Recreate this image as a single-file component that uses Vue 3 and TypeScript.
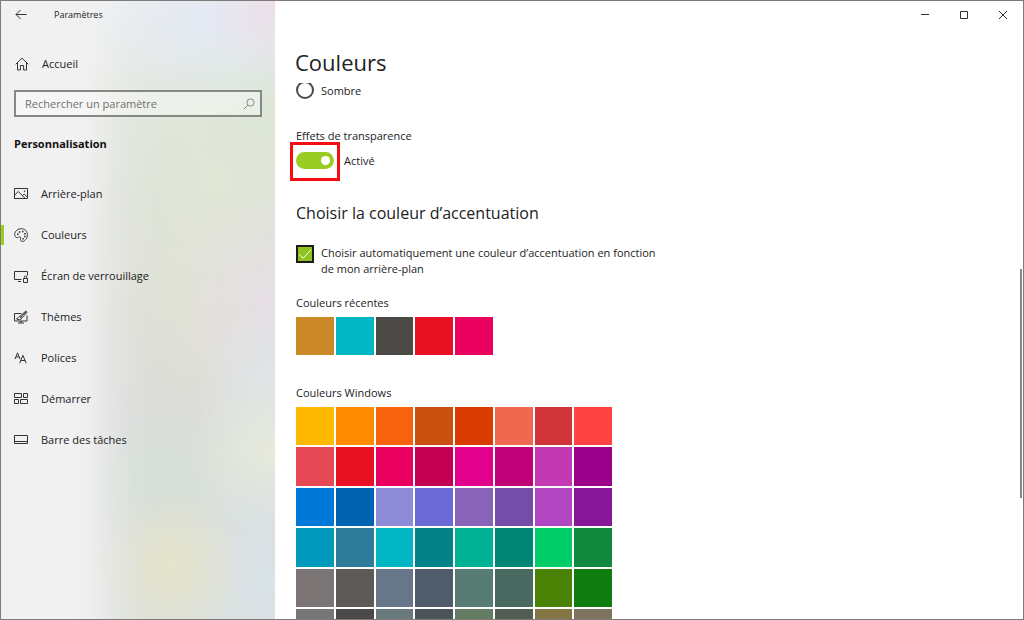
<script setup lang="ts">
import { ref } from 'vue'

interface NavItem {
  id: string
  label: string
}

const navItems: NavItem[] = [
  { id: 'background', label: 'Arrière-plan' },
  { id: 'colors', label: 'Couleurs' },
  { id: 'lock', label: 'Écran de verrouillage' },
  { id: 'themes', label: 'Thèmes' },
  { id: 'fonts', label: 'Polices' },
  { id: 'start', label: 'Démarrer' },
  { id: 'taskbar', label: 'Barre des tâches' },
]

const recentColors: string[] = ['#ca8829', '#00b7c3', '#4a4946', '#e81123', '#ea005e']

const windowsColors: string[] = [
  '#ffb900', '#ff8c00', '#f7630c', '#ca5010', '#da3b01', '#ef6950', '#d13438', '#ff4343',
  '#e74856', '#e81123', '#ea005e', '#c30052', '#e3008c', '#bf0077', '#c239b3', '#9a0089',
  '#0078d7', '#0063b1', '#8e8cd8', '#6b69d6', '#8764b8', '#744da9', '#b146c2', '#881798',
  '#0099bc', '#2d7d9a', '#00b7c3', '#038387', '#00b294', '#018574', '#00cc6a', '#10893e',
  '#7a7574', '#5d5a58', '#68768a', '#515c6b', '#567c73', '#486860', '#498205', '#107c10',
  '#767676', '#4c4a48', '#69797e', '#4a5459', '#647c64', '#525e54', '#847545', '#7e735f',
]

const active = ref('colors')
const query = ref('')
const mode = ref('light')
const transparency = ref(true)
const automatic = ref(true)
</script>

<template>
  <div class="window">
    <aside class="sidebar">
      <header class="bar">
        <button class="back" type="button" aria-label="Retour">
          <svg viewBox="0 0 12 12" width="12" height="12"><path d="M11.5 5.500H1M5.500 1 1 5.500 5.500 10" /></svg>
        </button>
        <span class="app-name">Paramètres</span>
      </header>

      <a class="home" href="#accueil">
        <svg viewBox="0 0 14 14" width="14" height="14"><path d="M.7 7.3 7 1.2l6.3 6.1M2.5 6v7h2.900V8.500h3.200V13h2.900V6" /></svg>
        <span>Accueil</span>
      </a>

      <form class="search" role="search" @submit.prevent>
        <input v-model="query" type="text" placeholder="Rechercher un paramètre" aria-label="Rechercher un paramètre" />
        <button type="submit" aria-label="Rechercher">
          <svg viewBox="0 0 12 12" width="12" height="12"><circle cx="7.5" cy="4.5" r="3.6" /><path d="M4.9 7.1.7 11.3" /></svg>
        </button>
      </form>

      <h2 class="category">Personnalisation</h2>

      <nav class="nav">
        <a
          v-for="item in navItems"
          :key="item.id"
          :href="'#' + item.id"
          :class="{ current: active === item.id }"
          @click.prevent="active = item.id"
        >
          <svg viewBox="0 0 14 14" width="14" height="14">
            <g v-if="item.id === 'background'">
              <path d="M.5 1.500h13v10H.5zM.7 8l3.600-3.500 6.800 6.800M8.400 8.700l1.800-1.600 3.200 3.200" />
              <circle cx="10.600" cy="4.200" r=".4" />
            </g>
            <g v-else-if="item.id === 'colors'">
              <path d="M7.4.7C10.900.7 13.400 3.300 13.400 6.800 13.400 10.500 10.900 13.400 8.300 13.400 6.500 13.400 6.300 12 6.600 10.700 6.900 9.300 6.300 8.600 5.200 8.900 4.200 9.200 3.700 10 2.700 9.500 1.500 8.900.7 8.200.7 6.500.7 3.200 3.800.7 7.400.7z" />
              <path class="solid" d="M3 5.500h1.600v1.600H3zM4.800 3.200h1.600v1.600H4.800zM7.900 2.700h1.600v1.600H7.900zM10.100 4.900h1.600v1.600h-1.600zM10 7.700h1.600v1.600H10zM8.300 9.900h1.500v1.500H8.300z" />
            </g>
            <g v-else-if="item.id === 'lock'">
              <path d="M7.500 10.500H.5v-8h13v4.200M9.500 9.500h4v4h-4zM10.300 9.300V8.200a1.200 1.200 0 0 1 2.400 0v1.100M4 12.500h3" />
            </g>
            <g v-else-if="item.id === 'themes'">
              <path d="M7.500 3.500h-7v7.500h12.500V5.500M4 13h6M7 11v2" />
              <path d="M2.500 8.800c1.800.3 1.500-2.600 3.300-2.300L11.800 1l1.300 1.200-5.300 6c-.4 1.700-3.700 1.900-5.300.6zM5.800 6.500l2 1.700" />
              <path d="M6.500 7.200 12.300 1.700" />
            </g>
            <g v-else-if="item.id === 'fonts'">
              <path d="M1 8.100 3.500 1.800l2.500 6.300M1.900 5.900h3.200M5.600 12.300 8.900 4.300l3.300 8M6.700 9.500h4.400" />
            </g>
            <g v-else-if="item.id === 'start'">
              <path d="M.5 1.500h7v4h-7zM9.500 1.500h4v4h-4zM.5 7.500h4v4h-4zM6.500 7.500h7v4h-7z" />
            </g>
            <g v-else>
              <path d="M.5 2.500h13v8H.5zM.5 8.500h13" />
            </g>
          </svg>
          <span>{{ item.label }}</span>
        </a>
      </nav>
    </aside>

    <main class="main">
      <div class="caption">
        <button type="button" aria-label="Réduire">
          <svg viewBox="0 0 10 10" width="10" height="10"><path d="M1 4.500h8" /></svg>
        </button>
        <button type="button" aria-label="Agrandir">
          <svg viewBox="0 0 10 10" width="10" height="10"><path d="M1.500 1.500h7v7h-7z" /></svg>
        </button>
        <button type="button" aria-label="Fermer">
          <svg viewBox="0 0 10 10" width="10" height="10"><path d="m1 1 8 8M9 1 1 9" /></svg>
        </button>
      </div>

      <h1>Couleurs</h1>

      <div class="viewport">
        <div class="content">
          <label class="choice radio">
            <input v-model="mode" type="radio" name="mode" value="dark" />
            <span>Sombre</span>
          </label>

          <section class="effects">
            <p id="transparency-label">Effets de transparence</p>
            <div class="switch-row">
              <span class="marked">
                <input id="transparency" v-model="transparency" type="checkbox" role="switch" aria-labelledby="transparency-label" />
              </span>
              <label for="transparency">{{ transparency ? 'Activé' : 'Désactivé' }}</label>
            </div>
          </section>

          <h2>Choisir la couleur d’accentuation</h2>

          <label class="choice check">
            <span class="box">
              <input v-model="automatic" type="checkbox" />
              <svg v-if="automatic" viewBox="0 0 18 18" width="18" height="18"><path d="m3.500 9.500 3.700 3.700 7.500-8" /></svg>
            </span>
            <span>Choisir automatiquement une couleur d’accentuation en fonction de mon arrière-plan</span>
          </label>

          <section class="palette">
            <h3>Couleurs récentes</h3>
            <div class="swatches recent">
              <button v-for="c in recentColors" :key="c" type="button" :aria-label="c" :style="{ backgroundColor: c }"></button>
            </div>
          </section>

          <section class="palette">
            <h3>Couleurs Windows</h3>
            <div class="swatches">
              <button v-for="c in windowsColors" :key="c" type="button" :aria-label="c" :style="{ backgroundColor: c }"></button>
            </div>
          </section>
        </div>
        <div class="thumb"></div>
      </div>
    </main>
  </div>
</template>

<style>
body {
  margin: 0;
}
</style>

<style scoped>
* {
  box-sizing: border-box;
}

.window {
  display: flex;
  height: 100vh;
  overflow: hidden;
  border: 1px solid #7d7b79;
  background: #fff;
  color: #222;
  font-family: "Open Sans", "Noto Sans", sans-serif;
  font-size: 11px;
  line-height: 16px;
}

h1,
h2,
h3,
p {
  margin: 0;
  font-weight: 400;
}

h3 {
  font-size: 11px;
}

button {
  padding: 0;
  border: 0;
  background: none;
}

a {
  color: inherit;
  text-decoration: none;
}

svg {
  display: block;
  flex: none;
  fill: none;
  stroke: #333;
  stroke-width: 1;
}

.solid {
  fill: #333;
  stroke: none;
}

.sidebar {
  display: flex;
  flex: none;
  flex-direction: column;
  width: 274px;
  background:
    linear-gradient(90deg, #f1f1f1 0, #f1f1f1 70px, rgba(241, 241, 241, 0.85) 88px, rgba(241, 241, 241, 0.4) 110px, rgba(241, 241, 241, 0.1) 132px, rgba(241, 241, 241, 0) 150px),
    radial-gradient(ellipse 75px 80px at 172px 565px, rgba(230, 227, 200, 0.9), rgba(230, 227, 200, 0)),
    radial-gradient(ellipse 110px 130px at 274px 580px, #d8e2e8, rgba(216, 226, 232, 0)),
    radial-gradient(ellipse 90px 80px at 274px 455px, #e7ebdc, rgba(231, 235, 220, 0)),
    radial-gradient(ellipse 80px 80px at 274px 385px, #dfe6e8, rgba(223, 230, 232, 0)),
    radial-gradient(ellipse 100px 110px at 274px 305px, #e6dee6, rgba(230, 222, 230, 0)),
    radial-gradient(ellipse 70px 70px at 274px 5px, #ecdfe9, rgba(236, 223, 233, 0)),
    radial-gradient(ellipse 150px 90px at 215px 20px, #e3e9f3, rgba(227, 233, 243, 0)),
    radial-gradient(ellipse 110px 80px at 274px 95px, rgba(219, 231, 213, 0.9), rgba(219, 231, 213, 0)),
    radial-gradient(ellipse 170px 190px at 215px 180px, #e1e6d6, rgba(225, 230, 214, 0)),
    radial-gradient(ellipse 120px 130px at 205px 310px, rgba(226, 224, 210, 0.8), rgba(226, 224, 210, 0)),
    radial-gradient(ellipse 110px 80px at 165px 480px, #d5dfd8, rgba(213, 223, 216, 0)),
    linear-gradient(#edf0f0, #e5e9e4 80px, #dbdfda 200px, #dbdcda 400px, #dce1dc);
}

.bar {
  display: flex;
  align-items: center;
  height: 27px;
  padding-left: 14px;
  gap: 27px;
}

.app-name {
  font-size: 9px;
}

.home {
  display: flex;
  align-items: center;
  gap: 13px;
  margin-top: 28px;
  padding-left: 14px;
}

.search {
  display: flex;
  align-items: center;
  height: 27px;
  margin: 18px 13px 0;
  border: 2px solid #868886;
  background: rgba(255, 255, 255, 0.4);
}

.search input {
  flex: 1;
  min-width: 0;
  padding: 0 0 0 9px;
  border: 0;
  outline: 0;
  background: none;
  font: inherit;
  color: #222;
}

.search input::placeholder {
  color: #707070;
  opacity: 1;
}

.search button {
  padding: 0 5px;
}

.search svg {
  stroke: #8a8a8a;
}

.category {
  margin: 19px 13px 0;
  font-size: 11px;
  font-weight: 700;
  color: #111;
}

.nav {
  display: flex;
  flex-direction: column;
  gap: 21px;
  margin-top: 32px;
}

.nav a {
  display: flex;
  align-items: center;
  gap: 13px;
  height: 20px;
  padding-left: 10px;
  border-left: 3px solid transparent;
}

.nav a.current {
  border-left-color: #9acd1e;
}

.main {
  display: flex;
  flex: 1;
  flex-direction: column;
  min-width: 0;
}

.caption {
  display: flex;
  justify-content: flex-end;
  height: 27px;
  padding-right: 1px;
}

.caption button {
  display: grid;
  place-items: center;
  width: 39px;
}

h1 {
  margin-top: 18px;
  padding-left: 20px;
  font-size: 22px;
  line-height: 32px;
}

.viewport {
  position: relative;
  flex: 1;
  min-height: 0;
  margin-top: 5px;
  overflow: hidden;
}

.content {
  margin-top: -2px;
  padding: 0 21px;
}

.choice {
  display: flex;
  gap: 7px;
}

.radio span {
  padding-top: 2px;
}

.radio input {
  appearance: none;
  width: 18px;
  height: 18px;
  margin: 0;
  border: 2px solid #4a4a4a;
  border-radius: 50%;
}

.radio input:checked {
  background: radial-gradient(#4a4a4a 4px, transparent 5px);
}

.effects {
  margin-top: 29px;
}

.switch-row {
  display: flex;
  align-items: center;
  gap: 10px;
  margin-top: 8px;
}

.marked {
  position: relative;
  display: flex;
}

.marked::after {
  position: absolute;
  inset: -10px -6px -12px -6px;
  border: 3px solid #f40d12;
  content: "";
  pointer-events: none;
}

.marked input {
  display: flex;
  align-items: center;
  appearance: none;
  width: 38px;
  height: 17px;
  margin: 0;
  padding: 0 4px;
  border-radius: 9px;
  background: #999;
}

.marked input::before {
  width: 9px;
  height: 9px;
  border-radius: 50%;
  background: #fff;
  content: "";
}

.marked input:checked {
  justify-content: flex-end;
  background: #9acd24;
}

.content h2 {
  margin-top: 32px;
  font-size: 16px;
  line-height: 24px;
}

.check {
  max-width: 372px;
  margin-top: 20px;
}

.box {
  position: relative;
  flex: none;
}

.box input {
  display: block;
  appearance: none;
  width: 18px;
  height: 18px;
  margin: 0;
  border: 2px solid #1c1c1c;
}

.box input:checked {
  background: #8fc31f;
}

.box svg {
  position: absolute;
  inset: 0;
  stroke: #fff;
  pointer-events: none;
}

.palette {
  margin-top: 18px;
}

.palette + .palette {
  margin-top: 30px;
}

.swatches {
  display: grid;
  grid-template-columns: repeat(8, 1fr);
  grid-auto-rows: 38px 39px;
  gap: 2px;
  width: 316px;
  margin-top: 6px;
}

.swatches.recent {
  grid-template-columns: repeat(5, 1fr);
  width: 197px;
}

.thumb {
  position: absolute;
  top: 34.7%;
  right: 1px;
  width: 2px;
  height: 42.7%;
  background: #858585;
}
</style>
